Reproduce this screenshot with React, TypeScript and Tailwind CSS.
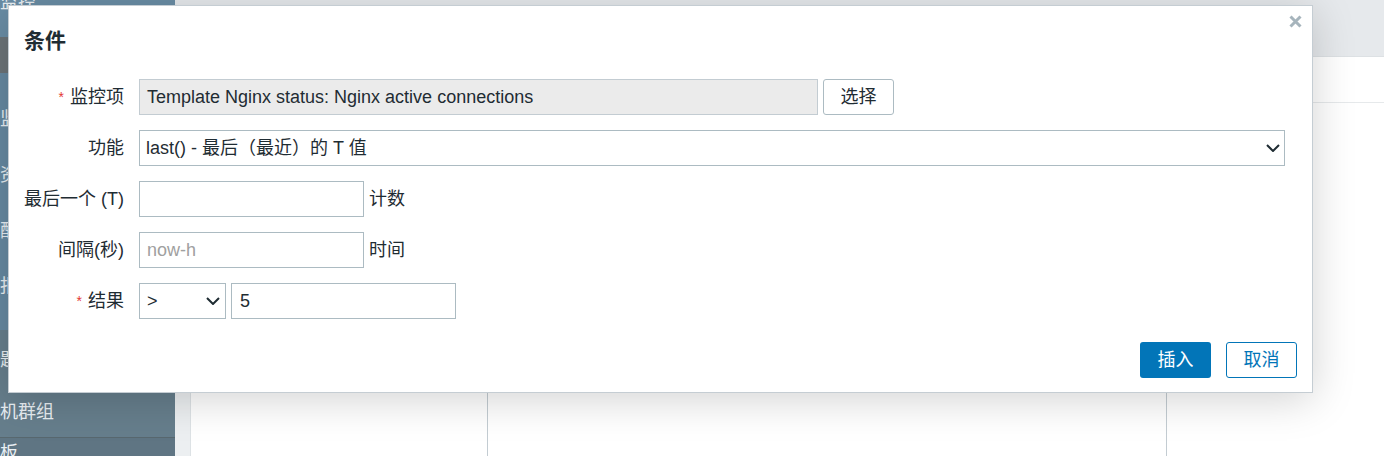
import React from "react";

function Chevron() {
  return (
    <svg width="14" height="8" viewBox="0 0 14 8" fill="none">
      <path d="M1 1 L7 7 L13 1" stroke="#1f2c33" strokeWidth="2" />
    </svg>
  );
}

function Label({ text, req }: { text: string; req?: boolean }) {
  return (
    <div className="flex h-[36px] items-center justify-end text-[18px] text-[#1f2c33] whitespace-nowrap">
      {req && <span className="mr-[6px] text-[14px] text-[#e33734] leading-none">*</span>}
      {text}
    </div>
  );
}

export default function App() {
  return (
    <div className="relative flex h-[456px] w-[1384px] overflow-hidden bg-[#eceff1] font-['Liberation_Sans','Noto_Sans_CJK_SC',sans-serif]">
      {/* sidebar */}
      <div className="flex w-[175px] flex-col text-[18px] text-[#e9eff3] leading-[24px]">
        <div className="flex h-[37px] items-start bg-[#6a8da5]">
          <span className="-mt-[10px]">监控</span>
        </div>
        <div className="h-[36px] bg-[#6c7478]" />
        <div className="flex h-[257px] flex-col bg-[#6689a1] pt-[34px]">
          <span className="h-[60px]">监测</span>
          <span className="h-[60px]">资产</span>
          <span className="h-[60px]">配置</span>
          <span className="h-[60px]">报表</span>
        </div>
        <div className="flex h-[107px] flex-col bg-[#667e8c] pt-[18px]">
          <span className="h-[52px]">题</span>
          <span>机群组</span>
        </div>
        <div className="h-[19px] border-t border-[#58686f] bg-[#5f7583] pt-[6px] leading-[18px]">
          <span>板</span>
        </div>
      </div>
      {/* main */}
      <div className="flex flex-1 flex-col">
        <div className="h-[57px] border-b border-[#dde1e4] bg-[#e6e9ec]" />
        <div className="flex flex-1">
          <div className="w-[15px] bg-[#eceff1]" />
          <div className="flex flex-1 flex-col border-l border-[#dde2e5] bg-white">
            <div className="h-[46px] border-b border-[#e6e9eb]" />
            <div className="flex flex-1">
              <div className="w-[296px]" />
              <div className="w-[679px] border-l border-[#c3ccd2]" />
              <div className="flex-1 border-l border-[#c3ccd2]" />
            </div>
          </div>
        </div>
      </div>

      {/* modal */}
      <div className="absolute left-[8px] top-[5px] flex h-[388px] w-[1305px] flex-col border border-[#c5cdd3] bg-white px-[15px] shadow-[0_6px_40px_rgba(0,0,0,0.18)]">
        <button className="absolute right-[10px] top-[9px]">
          <svg width="13" height="13" viewBox="0 0 13 13">
            <path d="M1.5 1.5 L11.5 11.5 M11.5 1.5 L1.5 11.5" stroke="#a6b4bc" strokeWidth="3" />
          </svg>
        </button>
        <div className="pt-[23px] text-[21px] font-bold leading-[24px] text-[#1f2c33]">条件</div>
        <div className="mt-[26px] grid grid-cols-[100px_1fr] gap-x-[15px] gap-y-[15px] text-[18px] text-[#1f2c33]">
          <Label text="监控项" req />
          <div className="flex gap-[5px]">
            <div className="flex h-[36px] w-[679px] items-center border border-[#c3ccd2] bg-[#ebebeb] px-[7px]">
              Template Nginx status: Nginx active connections
            </div>
            <button className="h-[36px] w-[71px] rounded-[3px] border border-[#acbbc2] bg-white text-[18px] text-[#1f2c33]">
              选择
            </button>
          </div>

          <Label text="功能" />
          <div className="flex h-[36px] w-[1146px] items-center justify-between border border-[#acbbc2] pl-[6px] pr-[4px]">
            <span>last() - 最后（最近）的 T 值</span>
            <Chevron />
          </div>

          <Label text="最后一个 (T)" />
          <div className="flex items-center gap-[5px]">
            <div className="h-[36px] w-[225px] border border-[#acbbc2]" />
            <span>计数</span>
          </div>

          <Label text="间隔(秒)" />
          <div className="flex items-center gap-[5px]">
            <div className="flex h-[36px] w-[225px] items-center border border-[#acbbc2] px-[7px] text-[#a0a0a0]">
              now-h
            </div>
            <span>时间</span>
          </div>

          <Label text="结果" req />
          <div className="flex items-center gap-[5px]">
            <div className="flex h-[36px] w-[87px] items-center justify-between border border-[#acbbc2] pl-[7px] pr-[5px]">
              <span>&gt;</span>
              <Chevron />
            </div>
            <div className="flex h-[36px] w-[225px] items-center border border-[#acbbc2] px-[8px]">5</div>
          </div>
        </div>
        <div className="mt-[23px] flex justify-end gap-[15px]">
          <button className="h-[36px] w-[71px] rounded-[3px] bg-[#0275b8] text-[18px] text-white">插入</button>
          <button className="h-[36px] w-[71px] rounded-[3px] border border-[#0275b8] bg-white text-[18px] text-[#0275b8]">
            取消
          </button>
        </div>
      </div>
    </div>
  );
}
